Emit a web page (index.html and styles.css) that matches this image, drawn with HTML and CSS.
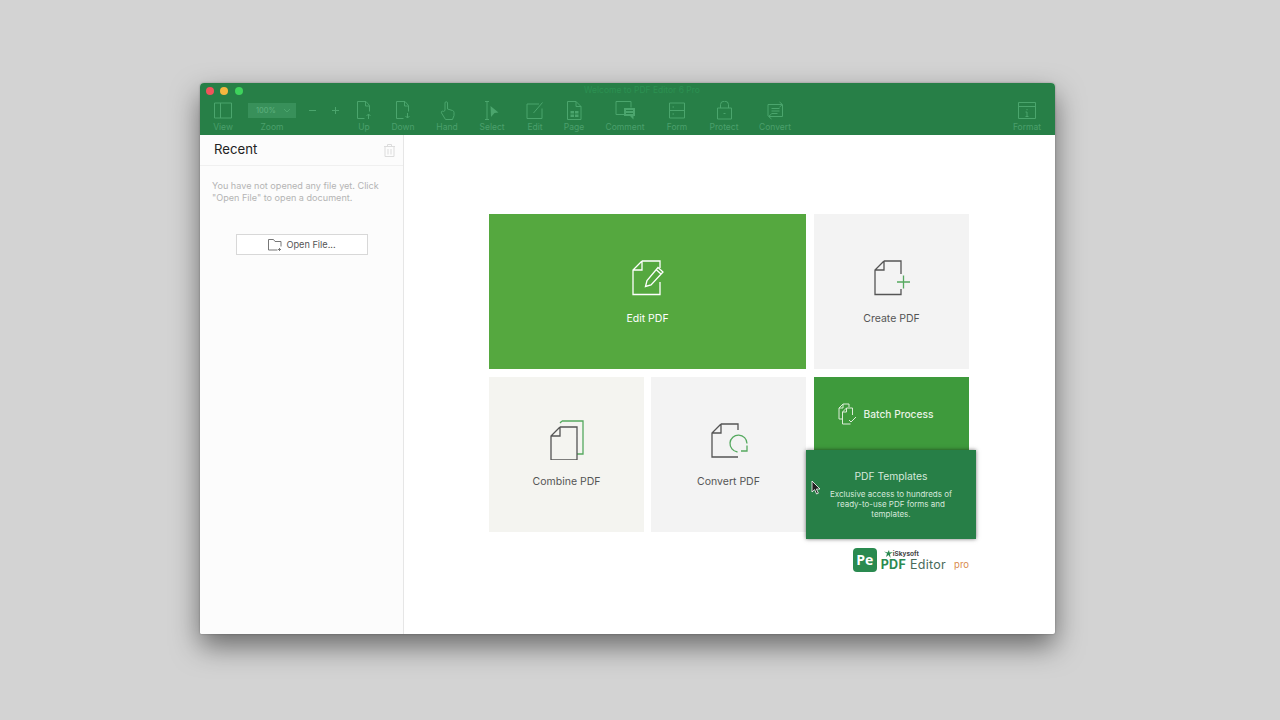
FILE: index.html
```html
<!DOCTYPE html>
<html>
<head>
<meta charset="utf-8">
<title>Welcome to PDF Editor 6 Pro</title>
<link rel="stylesheet" href="styles.css">
</head>
<body>
	<div class="window">
		<div class="titlebar">
			<div class="lights">
				<span class="light red"></span>
				<span class="light yellow"></span>
				<span class="light green"></span>
			</div>
			<div class="win-title">Welcome to PDF Editor 6 Pro</div>
		</div>

		<div class="toolbar">
			<div class="tool">
				<svg width="18" height="16" viewBox="0 0 18 16"><path d="M.5 .5h17v15H.5zM6.500 .5v15"/></svg>
				<span>View</span>
			</div>
			<div class="tool">
				<div class="zoom-box">100%<svg width="8" height="5" viewBox="0 0 8 5"><path d="M1 1l3 3 3-3"/></svg></div>
				<span>Zoom</span>
			</div>
			<div class="tool"><svg width="9" height="17" viewBox="0 0 9 17"><path d="M1 8.500h7"/></svg></div>
			<div class="tool"><svg width="9" height="17" viewBox="0 0 9 17"><path d="M1 8.500h7M4.500 5v7"/></svg></div>
			<div class="tool">
				<svg width="15" height="19" viewBox="0 0 15 19"><path d="M5 .5h4l3.500 4v6M7.500 17.500H.5V.5h4.500M8.500 .5v4.500h4M11.500 18v-5M9.500 15l2-2 2 2"/></svg>
				<span>Up</span>
			</div>
			<div class="tool">
				<svg width="15" height="19" viewBox="0 0 15 19"><path d="M5 .5h4l3.500 4v6M7.500 17.500H.5V.5h4.500M8.500 .5v4.500h4M11.500 12v5M9.500 15l2 2 2-2"/></svg>
				<span>Down</span>
			</div>
			<div class="tool">
				<svg width="15" height="19" viewBox="0 0 15 19"><path d="M5 9.500V2a1.200 1.200 0 0 1 2.500 0v6l5 1.500c1 .4 1.500 1 1.500 2v3l-1.500 4h-7L1.500 12c-.8-1.200.6-2.500 1.800-1.500z"/></svg>
				<span>Hand</span>
			</div>
			<div class="tool">
				<svg width="16" height="19" viewBox="0 0 16 19"><path d="M1 .5h4M1 18.500h4M3 .5v18"/><path class="solid" d="M6.500 5l8 6.500-4 .5-3.500 4z"/></svg>
				<span>Select</span>
			</div>
			<div class="tool">
				<svg width="18" height="18" viewBox="0 0 18 18"><path d="M13 2.500H1v14.500h15V7M7.500 11.500L16.500 1"/></svg>
				<span>Edit</span>
			</div>
			<div class="tool">
				<svg width="15" height="19" viewBox="0 0 15 19"><path d="M.5 .5h8.500l5 5v13H.5zM9 .5v5h5"/><path class="solid" d="M3.500 10h3.500v2.500H3.500zM8 10h3.500v2.500H8zM3.500 13.500h3.500V16H3.500zM8 13.500h3.500V16H8z"/></svg>
				<span>Page</span>
			</div>
			<div class="tool">
				<svg width="21" height="19" viewBox="0 0 21 19"><path d="M9 13.500H1V.5h15v6"/><path class="solid" d="M9 7h11v8h-1.500v3.500L15 15H9z"/><path class="cut" d="M11 9.500h7M11 12.500h7"/></svg>
				<span>Comment</span>
			</div>
			<div class="tool">
				<svg width="16" height="16" viewBox="0 0 16 16"><path d="M.5 .5h15v15H.5zM.5 8h15M3.500 4.500h1.500M3.500 11.500h1.500"/></svg>
				<span>Form</span>
			</div>
			<div class="tool">
				<svg width="15" height="18" viewBox="0 0 15 18"><path d="M.5 6.500h14v11H.5zM3.500 6.500V3a3 2.500 0 0 1 8 0v3.500M6.500 12h2"/></svg>
				<span>Protect</span>
			</div>
			<div class="tool">
				<svg width="17" height="19" viewBox="0 0 17 19"><path d="M1 15V3.500h14M12.500 1l3 2.500-3 2.500M15.500 4v11.500H2M4.500 13l-3 2.500 3 2.500M4.500 7.500h8M4.500 10h8M4.500 12.500h6"/></svg>
				<span>Convert</span>
			</div>
			<div class="spacer"></div>
			<div class="tool">
				<svg width="18" height="17" viewBox="0 0 18 17"><path d="M.5 .5h17v16H.5zM.5 4.500h17M9 7v1.200M7.500 10H9v4.500M7.500 14.500h3"/></svg>
				<span>Format</span>
			</div>
		</div>

		<div class="body">
			<div class="sidebar">
				<div class="side-head">
					<h3>Recent</h3>
					<svg class="trash" width="11" height="13" viewBox="0 0 11 13"><path d="M0 2.500h11M3.500 2.500V.5h4v2M1 2.500v10h9v-10M4 5v5.500M7 5v5.500"/></svg>
				</div>
				<p class="empty-msg">You have not opened any file yet. Click "Open File" to open a document.</p>
				<div class="open-btn">
					<svg width="15" height="12" viewBox="0 0 15 12"><path d="M.5 11V.5h5l1.500 2h6v5M.5 11h9M11.500 9v3M10 10.500h3"/></svg>
					Open File...
				</div>
			</div>

			<div class="main">
				<div class="tiles">
					<div class="tile tile-edit">
						<svg width="32" height="36" viewBox="0 0 32 36"><path d="M10 1h18v7M28 22v12.500H1V10L10 1M10 1v9H1M13.500 26.500l1.500-6L26 7.500l5 4.500L19 25zM24 9.500l5 4.500"/></svg>
						<span>Edit PDF</span>
					</div>
					<div class="tile col-right">
						<svg width="36" height="36" viewBox="0 0 36 36"><path d="M10 1h17v13M27 29v5.500H1V10L10 1M10 1v9H1"/><path class="green-line" d="M23 22h13M29.500 15.500v13"/></svg>
						<span>Create PDF</span>
					</div>
					<div class="tile tile-combine">
						<svg width="34" height="40" viewBox="0 0 34 40"><path class="green-line" d="M12 1h21v33h-6M12 1l-2 2"/><path d="M10 7h17v33H1V16L10 7M10 7v9H1"/></svg>
						<span>Combine PDF</span>
					</div>
					<div class="tile">
						<svg class="icon-convert" width="36" height="36" viewBox="0 0 36 36"><path d="M10 1h17v6M27 34H1V10L10 1M10 1v9H1"/><path class="green-line" d="M26.500 29A8.500 8.500 0 1 1 36 20.500M36 22.500v5.500h-6"/></svg>
						<span>Convert PDF</span>
					</div>
					<div class="batch-cell col-right">
						<div class="batch">
							<svg width="19" height="22" viewBox="0 0 19 22"><path d="M5 1h6v3M5 1L1 5v11h3M5 1v4H1M8.500 5h6v7M8.500 5l-4 4v12h8M8.500 5v4h-4M11 17l2 2 5-5"/></svg>
							<span>Batch Process</span>
						</div>
					</div>
				</div>

				<div class="brand">
					<div class="brand-mark">Pe</div>
					<div class="brand-text">
						<div class="brand-maker"><svg width="9" height="8" viewBox="0 0 9 8"><path d="M0 1.500l3.500 1L5 0l.5 2.500L9 2 6 4l.5 4L4.500 5 2 7l1-3.500z"/></svg>iSkysoft</div>
						<div class="brand-name"><b>PDF</b> Editor</div>
					</div>
					<div class="brand-pro">pro</div>
				</div>

				<div class="tpl-popup">
					<h4>PDF Templates</h4>
					<p>Exclusive access to hundreds of ready-to-use PDF forms and templates.</p>
				</div>
				<svg class="cursor" width="10" height="15" viewBox="0 0 10 15"><path d="M1 1v11l2.600-2.400 2 4.400 1.800-.8-2-4.200H9z"/></svg>
			</div>
		</div>
	</div>
</body>
</html>
```
FILE: styles.css
```css
body {
	margin: 0;
	height: 720px;
	overflow: hidden;
	background-color: #d3d3d3;
	font-family: Inter, "Liberation Sans", sans-serif;
	padding: 83px 0 0 200px;
	box-sizing: border-box;
}

.window {
	width: 855px;
	height: 551px;
	background-color: #ffffff;
	border-radius: 4px 4px 2px 2px;
	box-shadow: 0 12px 28px rgba(0, 0, 0, 0.5), 0 0 2px rgba(0, 0, 0, 0.3);
	display: flex;
	flex-direction: column;
	overflow: hidden;
}

.titlebar {
	height: 15px;
	background-color: #277f47;
	position: relative;
	flex-shrink: 0;
}

.lights {
	display: flex;
	gap: 6.400px;
	padding: 4px 0 0 6px;
}

.light {
	width: 8px;
	height: 8px;
	border-radius: 50%;
}

.red { background-color: #f2545b; }
.yellow { background-color: #f4b73f; }
.green { background-color: #3ed35c; }

.win-title {
	position: absolute;
	left: 29px;
	right: 0;
	top: 2px;
	text-align: center;
	font-size: 8.500px;
	line-height: 11px;
	color: #2c9152;
}

.toolbar {
	height: 37px;
	background-color: #277f47;
	flex-shrink: 0;
	padding: 3px 3px 0;
	box-sizing: border-box;
	display: grid;
	grid-template-columns: 40px 58px 22px 24px 34px 44px 44px 46px 40px 38px 64px 40px 54px 48px 1fr 50px;
}

.tool {
	display: flex;
	flex-direction: column;
	align-items: center;
	font-size: 8.500px;
	line-height: 10px;
	color: #4b9f6c;
}

.tool > svg {
	height: 19px;
	margin-bottom: 2px;
}

.tool svg path {
	fill: none;
	stroke: #4ba56d;
	stroke-width: 1;
}

.tool svg path.solid {
	fill: #4ba56d;
	stroke: none;
}

.tool svg path.cut {
	stroke: #277f47;
}

.tool span {
	white-space: nowrap;
}

.zoom-box {
	width: 48px;
	height: 15px;
	margin: 2px 0 4px;
	background-color: #38905a;
	color: #5fb07f;
	font-size: 7.500px;
	line-height: 15px;
	display: flex;
	justify-content: space-between;
	align-items: center;
	padding: 0 5px 0 8px;
	box-sizing: border-box;
}

.body {
	flex: 1;
	display: flex;
	min-height: 0;
}

.sidebar {
	width: 204px;
	flex-shrink: 0;
	background-color: #fcfcfc;
	border-right: 1px solid #e6e6e6;
	box-sizing: border-box;
}

.side-head {
	height: 30px;
	display: flex;
	justify-content: space-between;
	align-items: center;
	padding: 0 8px 0 14px;
	border-bottom: 1px solid #f0f0f0;
}

.side-head h3 {
	margin: 0 0 2px 0;
	font-size: 13.200px;
	font-weight: 400;
	color: #222222;
}

.trash path {
	fill: none;
	stroke: #dcdcdc;
}

.empty-msg {
	margin: 14px 10px 0 12px;
	font-size: 9.100px;
	line-height: 12px;
	color: #b4b4b4;
}

.open-btn {
	width: 132px;
	height: 21px;
	margin: 30px 0 0 36px;
	background-color: #ffffff;
	border: 1px solid #d8d8d8;
	box-sizing: border-box;
	display: flex;
	justify-content: center;
	align-items: center;
	gap: 3px;
	font-size: 9.200px;
	color: #555555;
}

.open-btn path {
	fill: none;
	stroke: #777777;
}

.main {
	flex: 1;
	position: relative;
	padding: 79px 86px 0 85px;
}

.tiles {
	display: grid;
	grid-template-columns: 155px 155px 156px;
	grid-template-rows: 155px 155px;
	column-gap: 7px;
	row-gap: 8px;
}

.col-right {
	margin-left: 1px;
}

.tile {
	background-color: #f3f3f3;
	display: flex;
	flex-direction: column;
	align-items: center;
	font-size: 10.500px;
	color: #555555;
	padding-top: 44px;
	box-sizing: border-box;
}

.tile svg {
	height: 40px;
	margin-bottom: 14px;
}

.tile-combine {
	background-color: #f4f4f0;
}

.tile-combine svg {
	margin-top: -1px;
	margin-bottom: 15px;
}

.tile svg.icon-convert {
	overflow: visible;
}

.tile svg path {
	fill: none;
	stroke: #555555;
	stroke-width: 1.300;
}

.tile svg path.green-line {
	stroke: #55a95f;
}

.tile-edit {
	grid-column: span 2;
	background-color: #55a83f;
	color: #ffffff;
}

.tile-edit svg path {
	stroke: #ffffff;
}

.batch {
	height: 74px;
	background-color: #3e9a3c;
	display: flex;
	justify-content: center;
	align-items: center;
	gap: 7px;
	padding-right: 12px;
	font-size: 10.200px;
	font-weight: 500;
	color: #e8f3e6;
}

.batch path {
	fill: none;
	stroke: #dcedd8;
}

.brand {
	display: flex;
	justify-content: flex-end;
	align-items: center;
	margin-top: 15px;
	height: 25px;
}

.brand-mark {
	width: 24px;
	height: 24px;
	border-radius: 4px;
	background-color: #2a8a50;
	color: #ffffff;
	font-family: "Open Sans", sans-serif;
	font-size: 14px;
	font-weight: 700;
	line-height: 24px;
	text-align: center;
}

.brand-text {
	margin-left: 4px;
	padding-top: 3px;
}

.brand-maker {
	display: flex;
	align-items: center;
	font-size: 6.500px;
	line-height: 8px;
	font-weight: 700;
	color: #444444;
	padding-left: 3px;
}

.brand-maker path {
	fill: #2a8a50;
}

.brand-name {
	font-size: 12.500px;
	line-height: 14px;
	color: #4a6a5a;
	letter-spacing: 0.3px;
}

.brand-name b {
	color: #2a8a50;
}

.brand-pro {
	margin: 10px 0 0 8px;
	font-size: 9.500px;
	color: #d98a4e;
}

.tpl-popup {
	position: absolute;
	left: 402px;
	top: 315px;
	width: 170px;
	height: 89px;
	background-color: #277f47;
	box-shadow: 0 0 4px rgba(0, 0, 0, 0.55);
	box-sizing: border-box;
	padding: 20px 18px 0;
	text-align: center;
	color: #d5e8db;
}

.tpl-popup h4 {
	margin: 0 0 6px 0;
	font-size: 10.300px;
	line-height: 13px;
	font-weight: 400;
}

.tpl-popup p {
	margin: 0;
	font-size: 8px;
	line-height: 10px;
}

.cursor {
	position: absolute;
	left: 407px;
	top: 345px;
}

.cursor path {
	fill: #222222;
	stroke: #ffffff;
	stroke-width: 0.8;
}
```
